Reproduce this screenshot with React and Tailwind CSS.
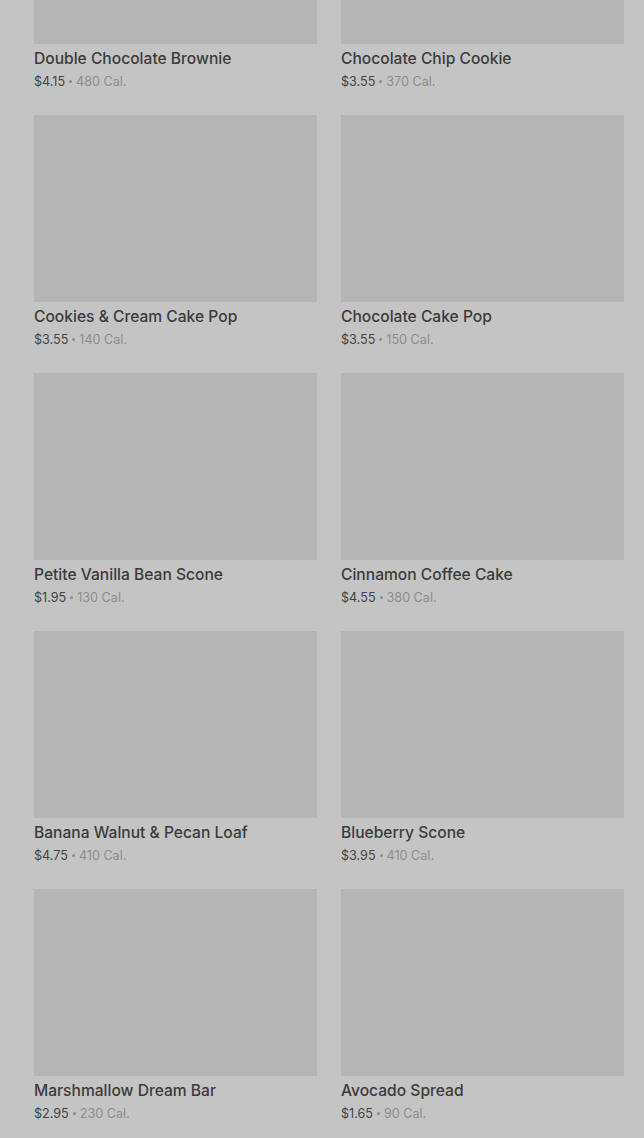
import React from 'react';

const items = [
  { name: 'Double Chocolate Brownie', price: '$4.15', cal: '480 Cal.' },
  { name: 'Chocolate Chip Cookie', price: '$3.55', cal: '370 Cal.' },
  { name: 'Cookies & Cream Cake Pop', price: '$3.55', cal: '140 Cal.' },
  { name: 'Chocolate Cake Pop', price: '$3.55', cal: '150 Cal.' },
  { name: 'Petite Vanilla Bean Scone', price: '$1.95', cal: '130 Cal.' },
  { name: 'Cinnamon Coffee Cake', price: '$4.55', cal: '380 Cal.' },
  { name: 'Banana Walnut & Pecan Loaf', price: '$4.75', cal: '410 Cal.' },
  { name: 'Blueberry Scone', price: '$3.95', cal: '410 Cal.' },
  { name: 'Marshmallow Dream Bar', price: '$2.95', cal: '230 Cal.' },
  { name: 'Avocado Spread', price: '$1.65', cal: '90 Cal.' },
];

export default function App() {
  return (
    <div className="min-h-[1138px] bg-[#c4c4c4] overflow-hidden" style={{ fontFamily: 'Inter, "Noto Sans", sans-serif' }}>
      <div className="grid grid-cols-2 gap-x-6 pl-[34px] pr-5 mt-[-143px]">
        {items.map((item) => (
          <div key={item.name} className="pb-[23px]">
            <div className="h-[187px] bg-[#b5b5b5]" />
            <p className="mt-[3px] text-[15.6px] leading-6 font-medium text-[#3b3b3b]">{item.name}</p>
            <p className="mt-px text-[12.6px] leading-[20px] text-[#8c8c8c]">
              <span className="text-[#434343]">{item.price}</span>
              <span className="mx-[4px] inline-block align-middle w-[3px] h-[3px] rounded-full bg-[#8c8c8c] -translate-y-px" />
              {item.cal}
            </p>
          </div>
        ))}
      </div>
    </div>
  );
}
